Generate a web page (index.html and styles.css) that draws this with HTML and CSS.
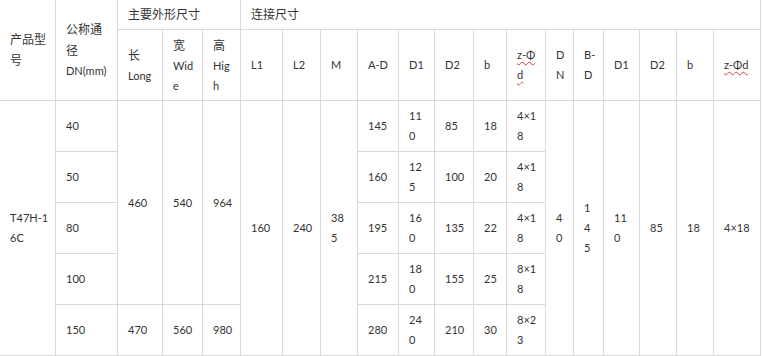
FILE: index.html
```html
<!DOCTYPE html>
<html lang="zh-CN">
<head>
<meta charset="utf-8">
<title>T47H-16C 规格尺寸</title>
<link rel="stylesheet" href="styles.css">
</head>
<body>
<table class="spec">
  <colgroup>
    <col class="w-model"><col class="w-dn"><col class="w-long"><col class="w-wide"><col class="w-high">
    <col class="w-l1"><col class="w-l2"><col class="w-m"><col class="w-ad"><col class="w-d1"><col class="w-d2"><col class="w-b"><col class="w-zd">
    <col class="w-dn2"><col class="w-bd"><col class="w-d1b"><col class="w-d2b"><col class="w-bb"><col class="w-zd2">
  </colgroup>
  <thead>
    <tr class="r-top">
      <th rowspan="2"><span class="zh">产品型<br>号</span></th>
      <th rowspan="2"><span class="zh">公称通<br>径</span><br>DN(mm)</th>
      <th colspan="3"><span class="zh">主要外形尺寸</span></th>
      <th colspan="14"><span class="zh">连接尺寸</span></th>
    </tr>
    <tr class="r-sub">
      <th><span class="zh">长</span><br>Long</th>
      <th><span class="zh">宽</span><br>Wid<br>e</th>
      <th><span class="zh">高</span><br>Hig<br>h</th>
      <th>L1</th>
      <th>L2</th>
      <th>M</th>
      <th>A-D</th>
      <th>D1</th>
      <th>D2</th>
      <th>b</th>
      <th><span class="spell">z-Φ</span><br><span class="spell">d</span></th>
      <th>D<br>N</th>
      <th>B-<br>D</th>
      <th>D1</th>
      <th>D2</th>
      <th>b</th>
      <th><span class="spell">z-Φd</span></th>
    </tr>
  </thead>
  <tbody>
    <tr>
      <td rowspan="5">T47H-1<br>6C</td>
      <td>40</td>
      <td rowspan="4">460</td>
      <td rowspan="4">540</td>
      <td rowspan="4">964</td>
      <td rowspan="5">160</td>
      <td rowspan="5">240</td>
      <td rowspan="5">38<br>5</td>
      <td>145</td>
      <td>11<br>0</td>
      <td>85</td>
      <td>18</td>
      <td>4×1<br>8</td>
      <td rowspan="5">4<br>0</td>
      <td rowspan="5">1<br>4<br>5</td>
      <td rowspan="5">11<br>0</td>
      <td rowspan="5">85</td>
      <td rowspan="5">18</td>
      <td rowspan="5">4×18</td>
    </tr>
    <tr>
      <td>50</td>
      <td>160</td>
      <td>12<br>5</td>
      <td>100</td>
      <td>20</td>
      <td>4×1<br>8</td>
    </tr>
    <tr>
      <td>80</td>
      <td>195</td>
      <td>16<br>0</td>
      <td>135</td>
      <td>22</td>
      <td>4×1<br>8</td>
    </tr>
    <tr>
      <td>100</td>
      <td>215</td>
      <td>18<br>0</td>
      <td>155</td>
      <td>25</td>
      <td>8×1<br>8</td>
    </tr>
    <tr>
      <td>150</td>
      <td>470</td>
      <td>560</td>
      <td>980</td>
      <td>280</td>
      <td>24<br>0</td>
      <td>210</td>
      <td>30</td>
      <td>8×2<br>3</td>
    </tr>
  </tbody>
</table>
</body>
</html>
```

FILE: styles.css
```css
html, body {
  margin: 0;
  padding: 0;
  background: #ffffff;
}

body {
  font-family: "Lato", "Noto Sans CJK SC", sans-serif;
  font-size: 11px;
  line-height: 20px;
  color: #333333;
}

.spec {
  border-collapse: collapse;
  table-layout: fixed;
  width: 762px;
  margin: -1px 0 0 -1px;
}

.spec th,
.spec td {
  border: 1px solid #d9d9d9;
  padding: 0 2px 0 10px;
  text-align: left;
  vertical-align: middle;
  font-weight: normal;
  white-space: nowrap;
  overflow: hidden;
}

.zh {
  font-family: "Noto Sans CJK SC", sans-serif;
  font-size: 12px;
}

.spell {
  text-decoration: underline wavy #e0413a;
  text-decoration-thickness: 1px;
  text-underline-offset: 2px;
}

.r-top th { height: 29px; }
.r-sub th { height: 70px; }
.spec tbody td { height: 50px; }

.w-model { width: 56px; }
.w-dn    { width: 62px; }
.w-long  { width: 45px; }
.w-wide  { width: 40px; }
.w-high  { width: 38px; }
.w-l1    { width: 42px; }
.w-l2    { width: 38px; }
.w-m     { width: 37px; }
.w-ad    { width: 41px; }
.w-d1    { width: 36px; }
.w-d2    { width: 39px; }
.w-b     { width: 33px; }
.w-zd    { width: 39px; }
.w-dn2   { width: 28px; }
.w-bd    { width: 30px; }
.w-d1b   { width: 36px; }
.w-d2b   { width: 37px; }
.w-bb    { width: 37px; }
.w-zd2   { width: 47px; }
```
